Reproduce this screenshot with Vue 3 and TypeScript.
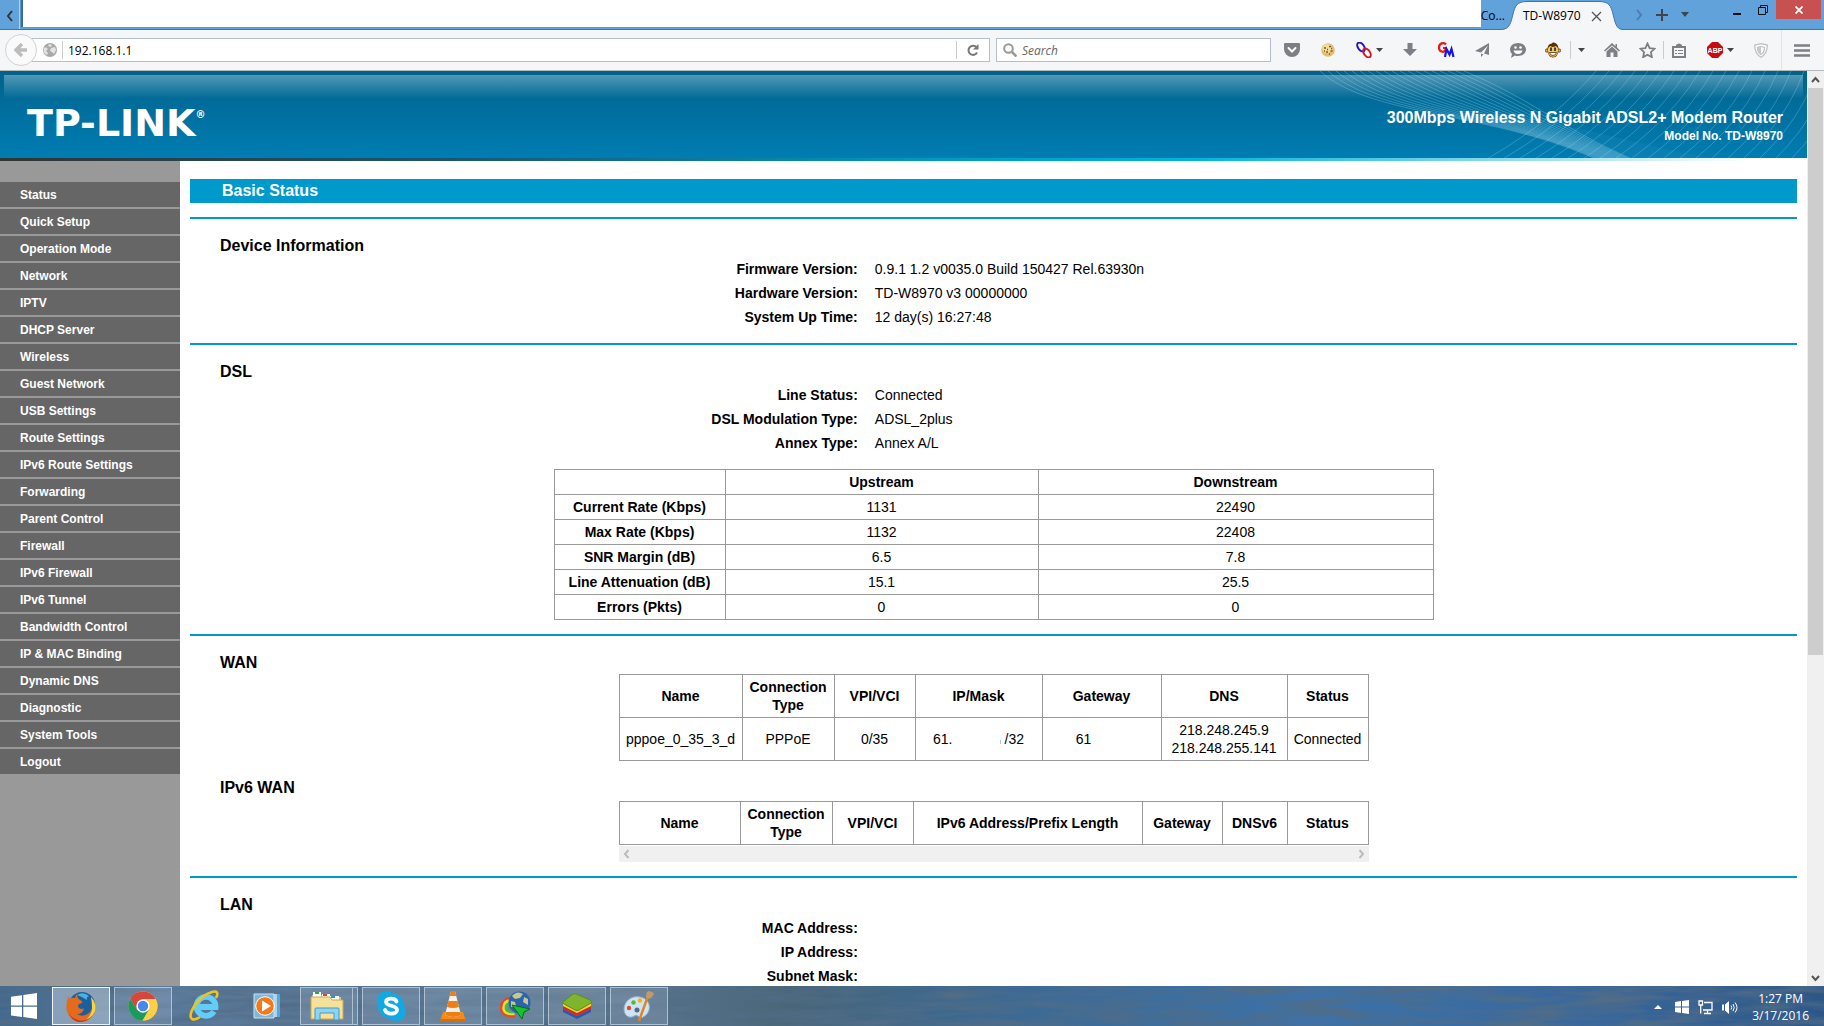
<script setup lang="ts">
import { ref } from 'vue'

const address = ref('192.168.1.1')
const query = ref('')

const menu: string[] = [
  'Status', 'Quick Setup', 'Operation Mode', 'Network', 'IPTV', 'DHCP Server', 'Wireless',
  'Guest Network', 'USB Settings', 'Route Settings', 'IPv6 Route Settings', 'Forwarding',
  'Parent Control', 'Firewall', 'IPv6 Firewall', 'IPv6 Tunnel', 'Bandwidth Control',
  'IP & MAC Binding', 'Dynamic DNS', 'Diagnostic', 'System Tools', 'Logout',
]

interface Pair { label: string; value: string }
const device: Pair[] = [
  { label: 'Firmware Version:', value: '0.9.1 1.2 v0035.0 Build 150427 Rel.63930n' },
  { label: 'Hardware Version:', value: 'TD-W8970 v3 00000000' },
  { label: 'System Up Time:', value: '12 day(s) 16:27:48' },
]
const dsl: Pair[] = [
  { label: 'Line Status:', value: 'Connected' },
  { label: 'DSL Modulation Type:', value: 'ADSL_2plus' },
  { label: 'Annex Type:', value: 'Annex A/L' },
]
const lan: Pair[] = [
  { label: 'MAC Address:', value: '' },
  { label: 'IP Address:', value: '' },
  { label: 'Subnet Mask:', value: '' },
]
const rates: string[][] = [
  ['Current Rate (Kbps)', '1131', '22490'],
  ['Max Rate (Kbps)', '1132', '22408'],
  ['SNR Margin (dB)', '6.5', '7.8'],
  ['Line Attenuation (dB)', '15.1', '25.5'],
  ['Errors (Pkts)', '0', '0'],
]

// Two crossing families of thin curves decorate the right end of the banner.
const falling = Array.from({ length: 19 }, (_, i) =>
  `M${10 + 8 * i} 0C${60 + 9 * i} ${46 - i} ${180 + 4 * i} ${40 + i} ${286 + 2 * i} 88`)
const rising = Array.from({ length: 26 }, (_, i) =>
  `M${130 + 17 * i} 112Q${230 + 15 * i} 66 ${286 + 13 * i} 0`)
</script>

<template>
  <div class="desktop">
    <header class="tabs">
      <button class="tab-scroll" aria-label="Scroll tabs left">
        <svg width="8" height="12" viewBox="0 0 8 12"><path d="M6 1 2 6l4 5" fill="none" stroke="#333" stroke-width="2" /></svg>
      </button>
      <div class="blank"></div>
      <div class="tab-prev">Co...</div>
      <div class="tab-active">
        <svg class="tab-shape" width="122" height="30" viewBox="0 0 122 30">
          <path d="M0 29.500C9 29.500 10 22 12 14 14 6 16 1.500 26 1.500H98C108 1.500 110 6 112 14 114 22 115 29.500 122 29.500V30H0Z" fill="#f5f6f7" />
          <path d="M0 29.500C9 29.500 10 22 12 14 14 6 16 1.500 26 1.500H98C108 1.500 110 6 112 14 114 22 115 29.500 122 29.500" fill="none" stroke="#3f74ad" />
        </svg>
        <span class="tab-title">TD-W8970</span>
        <button class="tab-close" aria-label="Close tab">
          <svg width="11" height="11" viewBox="0 0 11 11"><path d="m1 1 9 9M10 1 1 10" stroke="#555" stroke-width="1.300" /></svg>
        </button>
      </div>
      <div class="tab-tools">
        <svg width="7" height="12" viewBox="0 0 7 12"><path d="m1 1 4 5-4 5" fill="none" stroke="#4b7dad" stroke-width="2" /></svg>
        <svg width="12" height="12" viewBox="0 0 12 12"><path d="M6 0v12M0 6h12" stroke="#3c4650" stroke-width="2" /></svg>
        <svg width="8" height="5" viewBox="0 0 8 5"><path d="M0 0h8L4 5Z" fill="#3c4650" /></svg>
      </div>
      <div class="window-tools">
        <button aria-label="Minimize"><svg width="8" height="14" viewBox="0 0 8 14"><path d="M0 11h8" stroke="#111" stroke-width="2" /></svg></button>
        <button aria-label="Restore"><svg width="10" height="10" viewBox="0 0 10 10"><path d="M.5 2.500h7v7h-7ZM2.500 2.500v-2h7v7h-2" fill="none" stroke="#111" /></svg></button>
        <button class="close" aria-label="Close"><svg width="8" height="8" viewBox="0 0 8 8"><path d="m.5.5 7 7M7.500.5l-7 7" stroke="#fff" stroke-width="1.800" /></svg></button>
      </div>
    </header>

    <nav class="toolbar">
      <button class="back" aria-label="Back">
        <svg width="14" height="14" viewBox="0 0 14 14"><path d="M13 7H3M8 1 2 7l6 6" fill="none" stroke="#bcbcbc" stroke-width="3.400" /></svg>
      </button>
      <form class="address" @submit.prevent>
        <svg width="14" height="14" viewBox="0 0 14 14">
          <circle cx="7" cy="7" r="7" fill="#a9a9a9" />
          <path d="M1 5c2-1 3 0 4 1l-2 2 2 2-1 2C2 11 0 9 1 5ZM6 1l3 1-1 2-3-1ZM8 5l4-1 1 3-2 4-2-2-2-1Z" fill="#e4e4e4" />
        </svg>
        <i class="rule"></i>
        <input v-model="address" aria-label="Address" />
        <i class="rule"></i>
        <button class="reload" aria-label="Reload">
          <svg width="12" height="12" viewBox="0 0 12 12"><path d="M9.500 3.500A4.500 4.500 0 1 0 10 8.500" fill="none" stroke="#777" stroke-width="2" /><path d="M11.500 0v5.500H6Z" fill="#777" /></svg>
        </button>
      </form>
      <form class="search" @submit.prevent>
        <svg width="14" height="14" viewBox="0 0 14 14"><circle cx="5.500" cy="5.500" r="4.300" fill="none" stroke="#999" stroke-width="2" /><path d="m9 9 4.500 4.500" stroke="#999" stroke-width="2.600" /></svg>
        <input v-model="query" placeholder="Search" aria-label="Search" />
      </form>
      <button aria-label="Pocket"><svg width="16" height="14" viewBox="0 0 16 14"><path d="M1 0h14q1 0 1 1v5a8 8 0 0 1-16 0V1q0-1 1-1Z" fill="#7c7f85" /><path d="m4.500 5 3.500 3.500L11.500 5" fill="none" stroke="#fff" stroke-width="2" stroke-linecap="round" /></svg></button>
      <button aria-label="Cookies">
        <svg width="16" height="16" viewBox="0 0 16 16"><circle cx="8" cy="8" r="6.800" fill="#e2be72" /><circle cx="7" cy="6.500" r="4.600" fill="#f2dba0" /><path d="M4 6h2M9 4.500h2M6 10h2M10.500 9h2M7 7.500h1M11 6.500h1M4 9h1M9 12h1" stroke="#7e5a1f" stroke-width="1.500" /></svg>
      </button>
      <button class="with-arrow" aria-label="Links">
        <svg width="16" height="16" viewBox="0 0 16 16"><ellipse cx="5" cy="5" rx="3" ry="5" transform="rotate(-35 5 5)" fill="none" stroke="#2213d0" stroke-width="2" /><ellipse cx="11" cy="11" rx="3" ry="5" transform="rotate(-35 11 11)" fill="none" stroke="#e0141c" stroke-width="2" /></svg>
        <svg width="7" height="4" viewBox="0 0 7 4"><path d="M0 0h7L3.500 4Z" fill="#444" /></svg>
      </button>
      <button aria-label="Downloads"><svg width="14" height="14" viewBox="0 0 14 14"><path d="M4.500 0h5v6H14l-7 7-7-7h4.500Z" fill="#7c7f85" /></svg></button>
      <button aria-label="GM">
        <svg width="18" height="16" viewBox="0 0 18 16"><path d="M9 2.500C7 0 2 1 2 5.500S7 11 8.500 8V6H6" fill="none" stroke="#f01414" stroke-width="2.200" /><path d="m8 15 1.500-8 3 5.500 2-5.500L16.500 15" fill="none" stroke="#1414e6" stroke-width="2.200" /></svg>
      </button>
      <button aria-label="Send"><svg width="14" height="14" viewBox="0 0 14 14"><path d="M14 0v12L9 10.500 13 2.500 6 9.500 0 8ZM6 10.500l2.500 1L6 14Z" fill="#7c7f85" /></svg></button>
      <button aria-label="Chat"><svg width="16" height="15" viewBox="0 0 16 15"><path d="M8 0c4.500 0 8 2.800 8 6.500S12.500 13 8 13q-1.500 0-3-.5L1 15l1-4Q0 9 0 6.500C0 2.800 3.500 0 8 0Z" fill="#7c7f85" /><circle cx="5.500" cy="4.500" r="1.300" fill="#fff" /><circle cx="10.500" cy="4.500" r="1.300" fill="#fff" /><path d="M3.500 7.500h9Q11.500 11 8 11T3.500 7.500Z" fill="#fff" /></svg></button>
      <button class="monkey" aria-label="Monkey">
        <svg width="16" height="16" viewBox="0 0 16 16"><circle cx="2" cy="8.500" r="1.700" fill="#e9a94f" stroke="#4a2a0a" stroke-width=".7" /><circle cx="14" cy="8.500" r="1.700" fill="#e9a94f" stroke="#4a2a0a" stroke-width=".7" /><path d="M9 .5Q7 0 7 1.500 2 2 2.500 8 3 15.500 8 15.500T13.500 8Q14 2 9 .5Z" fill="#5a3008" /><path d="M5.500 4Q8 6 10.500 4 13.500 5 13 8.500 12.500 14.800 8 14.800T3 8.500Q2.500 5 5.500 4Z" fill="#f5c766" /><path d="M6 5.500v3.500M10 5.500v3.500" stroke="#222" stroke-width="1.600" /><path d="M4.500 10.500h7Q11 13.500 8 13.500T4.500 10.500Z" fill="#fff" stroke="#5a3008" stroke-width=".8" /></svg>
      </button>
      <button class="drop" aria-label="Monkey menu"><svg width="7" height="4" viewBox="0 0 7 4"><path d="M0 0h7L3.500 4Z" fill="#444" /></svg></button>
      <button aria-label="Home"><svg width="16" height="14" viewBox="0 0 16 14"><path d="M8 0l3.500 3.200V1H13v3.600L16 7.500l-1 1-7-6-7 6-1-1Z" fill="#7c7f85" /><path d="m2.500 8.500 5.500-5 5.500 5V14H9.500V9.500h-3V14h-4Z" fill="#7c7f85" /></svg></button>
      <button class="star" aria-label="Bookmark"><svg width="17" height="16" viewBox="0 0 17 16"><path d="m8.500 1.500 2.100 4.700 5 .5-3.700 3.500 1 5-4.400-2.500-4.400 2.500 1-5L1.400 6.700l5-.5Z" fill="none" stroke="#7c7f85" stroke-width="1.800" /></svg></button>
      <button class="list" aria-label="Bookmarks list"><svg width="14" height="15" viewBox="0 0 14 15"><path d="M1 4h12v10H1Z" fill="none" stroke="#7c7f85" stroke-width="2" /><path d="M4 3.500V2Q7-1 10 2V3.500Z" fill="#7c7f85" /><path d="M3 7.500h2M6 7.500h5M3 10.500h2M6 10.500h5" stroke="#7c7f85" /></svg></button>
      <button class="with-arrow" aria-label="ABP">
        <svg width="16" height="16" viewBox="0 0 16 16"><path d="M5 0h6l5 5v6l-5 5H5l-5-5V5Z" fill="#c70d12" /><text x="8" y="11" text-anchor="middle" class="abp">ABP</text></svg>
        <svg width="7" height="4" viewBox="0 0 7 4"><path d="M0 0h7L3.500 4Z" fill="#444" /></svg>
      </button>
      <button aria-label="Shield"><svg width="14" height="15" viewBox="0 0 14 15"><path d="M7 .7 13.300 2C13.300 8 11 12 7 14.300 3 12 .7 8 .7 2Z" fill="#fff" stroke="#c0c0c0" stroke-width="1.300" /><path d="M7 3.500 10.500 4.500C10.500 8 9.500 10 7 11.500 4.500 10 3.500 8 3.500 4.500Z" fill="none" stroke="#c0c0c0" stroke-width="1.300" /><path d="M7 3.500v8C4.500 10 3.500 8 3.500 4.500Z" fill="#c8c8c8" /></svg></button>
      <button class="burger" aria-label="Open menu"><svg width="16" height="13" viewBox="0 0 16 13"><path d="M0 1.500h16M0 6.500h16M0 11.500h16" stroke="#7c7f85" stroke-width="2.600" /></svg></button>
    </nav>

    <div class="viewport">
      <div class="page">
        <div class="banner">
          <div class="gloss"></div>
          <svg class="waves" width="497" height="87" viewBox="0 0 497 87" fill="none" stroke="#bfe6f5">
            <path d="M50 48C170 38 220 62 290 87H400C300 70 220 30 50 48Z" fill="#8fd3ee" opacity=".06" stroke="none" />
            <path v-for="d in falling" :key="d" :d="d" opacity=".27" />
            <path v-for="d in rising" :key="d" :d="d" opacity=".25" />
          </svg>
          <div class="logo">TP-LINK<sup>®</sup></div>
          <div class="product">
            <strong>300Mbps Wireless N Gigabit ADSL2+ Modem Router</strong>
            <b>Model No. TD-W8970</b>
          </div>
        </div>
        <div class="strip"></div>
        <div class="columns">
          <nav class="side">
            <a v-for="item in menu" :key="item" href="#">{{ item }}</a>
          </nav>
          <main>
            <h1>Basic Status</h1>
            <section>
              <h2>Device Information</h2>
              <dl>
                <template v-for="p in device" :key="p.label"><dt>{{ p.label }}</dt><dd>{{ p.value }}</dd></template>
              </dl>
            </section>
            <section>
              <h2>DSL</h2>
              <dl>
                <template v-for="p in dsl" :key="p.label"><dt>{{ p.label }}</dt><dd>{{ p.value }}</dd></template>
              </dl>
              <table class="rates">
                <colgroup><col class="w171" /><col class="w313" /><col /></colgroup>
                <thead><tr><td></td><th>Upstream</th><th>Downstream</th></tr></thead>
                <tbody>
                  <tr v-for="r in rates" :key="r[0]"><th>{{ r[0] }}</th><td>{{ r[1] }}</td><td>{{ r[2] }}</td></tr>
                </tbody>
              </table>
            </section>
            <section>
              <h2>WAN</h2>
              <table class="wan">
                <colgroup><col class="w123" /><col class="w92" /><col class="w81" /><col class="w127" /><col class="w119" /><col class="w126" /><col class="w81" /></colgroup>
                <thead><tr><th>Name</th><th>Connection Type</th><th>VPI/VCI</th><th>IP/Mask</th><th>Gateway</th><th>DNS</th><th>Status</th></tr></thead>
                <tbody>
                  <tr>
                    <td>pppoe_0_35_3_d</td><td>PPPoE</td><td>0/35</td>
                    <td>61.<i class="erased"></i>/32</td>
                    <td>61<i class="erased short"></i></td>
                    <td>218.248.245.9<br />218.248.255.141</td><td>Connected</td>
                  </tr>
                </tbody>
              </table>
              <h2 class="second">IPv6 WAN</h2>
              <table class="wan">
                <colgroup><col class="w121" /><col class="w92" /><col class="w81" /><col class="w229" /><col class="w80" /><col class="w65" /><col class="w81" /></colgroup>
                <thead><tr><th>Name</th><th>Connection Type</th><th>VPI/VCI</th><th>IPv6 Address/Prefix Length</th><th>Gateway</th><th>DNSv6</th><th>Status</th></tr></thead>
              </table>
              <div class="hscroll">
                <svg width="7" height="10" viewBox="0 0 7 10"><path d="M5.500 1 2 5l3.500 4" fill="none" stroke="#bcbcbc" stroke-width="2" /></svg>
                <svg width="7" height="10" viewBox="0 0 7 10"><path d="M1.500 1 5 5 1.500 9" fill="none" stroke="#bcbcbc" stroke-width="2" /></svg>
              </div>
            </section>
            <section>
              <h2>LAN</h2>
              <dl>
                <template v-for="p in lan" :key="p.label"><dt>{{ p.label }}</dt><dd>{{ p.value }}</dd></template>
              </dl>
            </section>
          </main>
        </div>
      </div>
      <div class="vscroll">
        <svg width="17" height="17" viewBox="0 0 17 17"><path d="m5 11 3.500-4 3.500 4" fill="none" stroke="#555" stroke-width="2" /></svg>
        <div class="thumb"></div>
        <svg width="17" height="17" viewBox="0 0 17 17"><path d="m5 7 3.500 4L12 7" fill="none" stroke="#555" stroke-width="2" /></svg>
      </div>
    </div>

    <footer class="taskbar">
      <svg class="water" width="100%" height="40" aria-hidden="true">
        <filter id="ripple" x="0" y="0" width="100%" height="100%">
          <feTurbulence type="fractalNoise" baseFrequency="0.014 0.12" numOctaves="5" seed="8" />
          <feColorMatrix values="0 0 0 0 .08  0 0 0 0 .15  0 0 0 0 .24  2.200 0 0 0 -.74" />
        </filter>
        <rect width="100%" height="40" filter="url(#ripple)" />
      </svg>
      <button class="start" aria-label="Start">
        <svg width="26" height="26" viewBox="0 0 26 26"><path d="M0 3.700 11 2.200V12.500H0ZM12.300 2 26 0v12.500H12.300ZM0 13.700h11V24L0 22.400ZM12.300 13.700H26V26l-13.700-2Z" fill="#fff" /></svg>
      </button>
      <button class="task current" aria-label="Firefox">
        <svg width="32" height="32" viewBox="0 0 32 32">
          <circle cx="17" cy="15" r="13" fill="#1d5f9e" /><path d="M12 5q6-4 12 1-3 1-2 4-4-3-10-5Z" fill="#49b3e0" />
          <path d="M26 7q6 7 4 14-3 9-13 10.500Q5 32 2 21 0 12 4 6l1 3q2-2 5-1 0-2 2-4 0 4 3 6 3 1 2 3l-3 1q-2 2 0 4 3 2 5 0-1 6-7 6 6 4 12-1t2-16Z" fill="#e66a1c" />
          <path d="M26 7q6 7 4 14-3 7-9 9 6-6 6-12t-1-11Z" fill="#fbd33c" /><path d="M2 15q0 12 11 15 8 2 14-4-5 7-14 6Q3 29 2 15Z" fill="#c93a1a" />
        </svg>
      </button>
      <button class="task open" aria-label="Chrome">
        <svg width="30" height="30" viewBox="0 0 30 30"><circle cx="15" cy="15" r="14.500" fill="#fdcf47" /><path d="M2.400 7.700A14.500 14.500 0 0 1 27.600 8H15L8.700 18.500Z" fill="#d8463a" /><path d="M2.400 7.700 8.800 18.500 21 18.500 15 29.500A14.500 14.500 0 0 1 2.400 7.700Z" fill="#1a9a5b" /><path d="M27.600 8A14.500 14.500 0 0 1 14.500 29.500L21 18.500 21 8Z" fill="#fdcf47" /><circle cx="15" cy="15" r="6.700" fill="#fff" /><circle cx="15" cy="15" r="5.200" fill="#4687f1" /></svg>
      </button>
      <button class="task" aria-label="Internet Explorer">
        <svg width="32" height="32" viewBox="0 0 32 32"><path d="M25 21.500A9.500 9.500 0 1 1 26.500 17H9" fill="none" stroke="#62cdf7" stroke-width="5.800" /><path d="M27 8Q31 0 23 2 13 5 6 15-1 26 3 29q3 1.500 8-2" fill="none" stroke="#f1c41c" stroke-width="2.600" /></svg>
      </button>
      <button class="task" aria-label="Media Player">
        <svg width="28" height="26" viewBox="0 0 28 26"><path d="M6 1h21v23H6Z" fill="#5ba7d4" /><path d="M4 1h20v23H4Z" fill="#a8d4ee" /><path d="M1 1h20v24H1Z" fill="#7fb7da" stroke="#c8e4f4" /><circle cx="12" cy="13" r="9.300" fill="#f27a1a" stroke="#fff" /><path d="m9 7.500 9 5.500-9 5.500Z" fill="#fff" /></svg>
      </button>
      <button class="task open stacked" aria-label="File Explorer">
        <svg width="34" height="30" viewBox="0 0 34 30"><path d="M2 4h10l2 2h17v20H2Z" fill="#e0c368" /><path d="M3 1h8v5H3ZM12 3h8v5h-8ZM20 5h9v5h-9Z" fill="#fff" /><path d="M5 1h4v2H5Z" fill="#2aa83c" /><path d="M13 3h4v2h-4Z" fill="#d8442c" /><path d="M21 5h4v2h-4Z" fill="#2f8fd8" /><path d="M1 6h19l2 3h11v19H1Z" fill="#f5e19a" stroke="#c9a94d" /><path d="M5 29V18q0-1 1-1h22q1 0 1 1v11h-5v-7H10v7Z" fill="#8ed3f0" stroke="#3f9cc8" /></svg>
      </button>
      <button class="task open" aria-label="Skype">
        <svg width="32" height="32" viewBox="0 0 32 32"><rect x="2" y="1" width="19" height="20" rx="9" fill="#12a8e4" /><rect x="11" y="12" width="20" height="19" rx="9" fill="#12a8e4" /><circle cx="16" cy="16" r="13" fill="#12a8e4" /><path d="M21.500 11.500C20 7.500 11 7.500 11 12c0 5 11 2.500 11 8 0 4.500-10 5-12 0" fill="none" stroke="#fff" stroke-width="3.800" stroke-linecap="round" /></svg>
      </button>
      <button class="task open" aria-label="VLC">
        <svg width="28" height="32" viewBox="0 0 28 32"><path d="M4 22h20l3 9H1Z" fill="#f28a1c" /><path d="M1 29h26v2H1Z" fill="#d96f0c" /><path d="M12 1h4l6 24q-8 4-16 0Z" fill="#f5efe8" /><path d="M12 1h4l1.300 5h-6.600ZM9.500 11h9l1.400 6q-6 2-12 0ZM6.800 22h14.500l.8 3q-8 4-16 0Z" fill="#f07d14" /></svg>
      </button>
      <button class="task open" aria-label="Download Manager">
        <svg width="32" height="30" viewBox="0 0 32 30"><path d="M13 7C5 7 2 12 2 17s4 9 14 8" fill="none" stroke="#e4462f" stroke-width="2.500" /><path d="M13 9.500C7 9.500 4.500 12.500 4.500 17s4 6.500 11 6" fill="none" stroke="#f3d92c" stroke-width="2.500" /><path d="M13 12C9 12 7 13.500 7 17s3 4 8 4" fill="none" stroke="#3fbf3f" stroke-width="2.500" /><circle cx="20.500" cy="11.500" r="11" fill="#2d62b0" /><path d="M13 5q5-6 11-2l-3 4-5 1ZM25 6l4 2v6l-5-3ZM12 10l4 1 1 4-5 1Z" fill="#c3c98a" /><path d="m13 14 18 4-6 3-2 7Z" fill="#17c32b" stroke="#0b6b18" /></svg>
      </button>
      <button class="task open" aria-label="BlueStacks">
        <svg width="30" height="26" viewBox="0 0 30 26"><path d="m1 16 14 7 14-7v3l-14 7-14-7Z" fill="#2559b5" /><path d="m1 13 14 7 14-7v3l-14 7-14-7Z" fill="#e0261c" /><path d="m1 10 14 7 14-7v3l-14 7-14-7Z" fill="#f6d323" /><path d="M1 9 11 1q1-1 3 0l14 6q2 1 1 3l-12 7q-2 1-4 0L2 11Q0 10 1 9Z" fill="#7fb52c" stroke="#5d9019" /></svg>
      </button>
      <button class="task open" aria-label="Paint">
        <svg width="32" height="32" viewBox="0 0 32 32"><path d="M17 7C8 5 1 12 1 19s6 10 10 7q3-2 5 1 3 2 7-2c6-6 4-16-6-18Z" fill="#cfe4f2" stroke="#8fb3cc" /><circle cx="6" cy="18" r="2.200" fill="#e2472f" /><circle cx="10.500" cy="12.500" r="2.200" fill="#59b53c" /><circle cx="17" cy="10.500" r="2.200" fill="#f3b120" /><circle cx="14" cy="20" r="2.500" fill="#4c6d8b" /><path d="m25 6-9 25" stroke="#e08526" stroke-width="2.500" /><path d="M23 7q0-6 3-6l5 2q-1 5-6 6Z" fill="#c49a66" /></svg>
      </button>
      <div class="tray">
        <svg width="8" height="4" viewBox="0 0 8 4"><path d="M0 4h8L4 0Z" fill="#fff" /></svg>
        <svg width="14" height="14" viewBox="0 0 14 14"><path d="M0 2 6 1v5.500H0ZM7 1l7-1v6.500H7ZM0 7.500h6V13L0 12ZM7 7.500h7V14l-7-1Z" fill="#fff" /></svg>
        <svg width="15" height="15" viewBox="0 0 15 15" fill="none" stroke="#fff" stroke-width="1.300"><path d="M6 2.500h8v7.500H5M9.500 10v3M6 13.500h7M1 1h3.500v4H1ZM2.700 5v8.500" /></svg>
        <svg width="16" height="15" viewBox="0 0 16 15"><path d="M0 4.500h2v6H0ZM3 4.500 7 1v13l-4-3.500Z" fill="#fff" /><path d="M9 5.500q1.500 2 0 4M11 4q2.500 3.500 0 7M13 2.500q4 5 0 10" fill="none" stroke="#fff" /></svg>
        <div class="clock"><span>1:27 PM</span><span>3/17/2016</span></div>
      </div>
    </footer>
  </div>
</template>

<style>
body {
  margin: 0;
}
</style>

<style scoped>
.desktop {
  display: flex;
  flex-direction: column;
  height: 100vh;
  overflow: hidden;
  background: #fff;
  color: #000;
  font-family: "Liberation Sans", Arial, sans-serif;
  font-size: 14px;
}
*,
*::before,
*::after {
  box-sizing: border-box;
}
button {
  display: flex;
  align-items: center;
  justify-content: center;
  flex: none;
  padding: 0;
  border: 0;
  background: none;
}
svg {
  display: block;
  flex: none;
}

/* Tab strip */
.tabs {
  display: flex;
  flex: none;
  height: 30px;
  border-bottom: 1px solid #3f74ad;
  background: #62a2db;
  font-family: "Open Sans", "Noto Sans", sans-serif;
  font-size: 12px;
}
.tab-scroll {
  width: 20px;
  height: 29px;
  padding-top: 3px;
  border-right: 1px solid #b5d2ec;
}
.blank {
  flex: 1;
  height: 27px;
  margin-left: 3px;
  background: #fff;
  box-shadow: -2px 0 1px #3d6d9c;
}
.tab-prev {
  margin-right: -4px;
  line-height: 32px;
}
.tab-active {
  position: relative;
  display: flex;
  align-items: center;
  width: 119px;
  height: 30px;
  padding-left: 22px;
}
.tab-shape {
  position: absolute;
  left: 0;
  top: 0;
}
.tab-title {
  position: relative;
  flex: 1;
}
.tab-close {
  position: relative;
  width: 11px;
  height: 11px;
  margin: 2px 18px 0 0;
}
.tab-tools {
  display: flex;
  align-items: center;
  gap: 13px;
  width: 104px;
  padding-left: 16px;
}
.window-tools {
  display: flex;
  margin-right: 3px;
}
.window-tools button {
  width: 26px;
  height: 19px;
}
.window-tools .close {
  width: 45px;
  background: #c75050;
}

/* Navigation toolbar */
.toolbar {
  display: flex;
  flex: none;
  align-items: center;
  height: 41px;
  padding-right: 3px;
  border-bottom: 1px solid #b9b9b9;
  background: #f5f6f7;
  font-family: "Open Sans", "Noto Sans", sans-serif;
  font-size: 12px;
}
.toolbar > button {
  width: 36px;
  height: 32px;
}
.toolbar > .back {
  z-index: 1;
  width: 32px;
  margin: 0 -7px 0 5px;
  border: 1px solid #d0d3d6;
  border-radius: 50%;
  background: #fafafa;
}
.address,
.search {
  display: flex;
  align-items: center;
  height: 24px;
  border: 1px solid #b4bfca;
  background: #fff;
}
.address {
  flex: 1;
  padding-left: 12px;
}
.search {
  flex: 0 1 275px;
  gap: 5px;
  margin: 0 3px 0 6px;
  padding-left: 6px;
}
.rule {
  width: 1px;
  height: 18px;
  margin: 0 5px;
  background: #ccc;
}
.address .rule + .reload {
  width: 22px;
  margin-right: 5px;
}
input {
  flex: 1;
  min-width: 0;
  height: 20px;
  padding: 0;
  border: 0;
  outline: 0;
  background: none;
  color: #000;
  font: inherit;
}
.search input::placeholder {
  color: #666;
  font-style: italic;
  opacity: 1;
}
.toolbar > .with-arrow {
  gap: 4px;
  justify-content: flex-start;
  width: 46px;
  padding-left: 10px;
}
.abp {
  fill: #fff;
  font: bold 7px "Liberation Sans", sans-serif;
}
.toolbar > .monkey {
  width: 34px;
}
.toolbar > .drop {
  justify-content: flex-start;
  width: 24px;
  height: 18px;
  padding-left: 7px;
  border-left: 1px solid #ccc;
}
.toolbar > .star {
  width: 33px;
  padding-left: 2px;
}
.toolbar > .list {
  width: 30px;
  height: 18px;
  margin-right: 4px;
  border-left: 1px solid #ccc;
}
.toolbar > .burger {
  width: 40px;
  height: 40px;
  margin-left: 2px;
  border-left: 1px solid #e2e3e4;
}

/* Router page */
.viewport {
  display: flex;
  flex: 1;
  min-height: 0;
}
.page {
  display: flex;
  flex: 1;
  flex-direction: column;
  min-width: 0;
  overflow: hidden;
}
.banner {
  position: relative;
  display: flex;
  flex: none;
  justify-content: space-between;
  height: 87px;
  padding: 0 24px 0 27px;
  background: linear-gradient(#00628a, #006c9a 35%, #007db2);
  color: #fff;
}
.gloss {
  position: absolute;
  top: 4px;
  right: 4px;
  left: 4px;
  height: 24px;
  background: linear-gradient(#5297b6, #006a96);
}
.waves {
  position: absolute;
  top: 0;
  right: 0;
}
.logo {
  position: relative;
  padding-top: 31px;
  font: bold 38px/42px "DejaVu Sans", sans-serif;
}
.logo sup {
  font-size: 10px;
  line-height: 10px;
  vertical-align: 18px;
}
.product {
  position: relative;
  display: flex;
  flex-direction: column;
  padding-top: 37px;
  font-size: 16px;
  line-height: 19px;
  text-align: right;
}
.product b {
  font-size: 12px;
}
.strip {
  flex: none;
  height: 3px;
  background: linear-gradient(90deg, #333, #1a5673 25%, #0099bd 51%, #00b4dc 66%, #5fcde6 78%, #fff 97%);
}
.columns {
  display: flex;
  flex: 1;
  min-height: 0;
}
.side {
  display: flex;
  flex: none;
  flex-direction: column;
  gap: 2px;
  width: 180px;
  padding-top: 21px;
  background: #999;
}
.side a {
  flex: none;
  height: 25px;
  padding-left: 20px;
  background: #666;
  color: #fff;
  font-size: 12px;
  font-weight: bold;
  line-height: 27px;
  text-decoration: none;
}
main {
  flex: 1;
  min-width: 0;
  padding: 18px 10px 0;
}
h1 {
  height: 24px;
  margin: 0 0 14px;
  padding-left: 32px;
  background: #0099cc;
  color: #fff;
  font-size: 16px;
  line-height: 24px;
}
section {
  padding: 14px 0;
  border-top: 2px solid #0099cc;
}
h2 {
  height: 24px;
  margin: 0;
  padding-left: 30px;
  font-size: 16px;
  line-height: 26px;
}
.second {
  margin: 14px 0 2px;
}
dl {
  display: grid;
  grid-template-columns: 21fr 29fr;
  column-gap: 17px;
  margin: 0;
  line-height: 24px;
}
dt {
  font-weight: bold;
  text-align: right;
}
dd {
  min-height: 24px;
  margin: 0;
}
table {
  margin: 0 auto;
  border-collapse: collapse;
  table-layout: fixed;
  line-height: 18px;
  text-align: center;
}
th,
td {
  padding: 0 4px;
  border: 1px solid #999;
}
.rates {
  width: 880px;
  margin-top: 14px;
}
.rates tr {
  height: 25px;
}
.wan {
  width: 750px;
}
.wan tr {
  height: 43px;
}
.wan td {
  padding: 0;
}
.w65 { width: 65px; }
.w80 { width: 80px; }
.w81 { width: 81px; }
.w92 { width: 92px; }
.w119 { width: 119px; }
.w121 { width: 121px; }
.w123 { width: 123px; }
.w126 { width: 126px; }
.w127 { width: 127px; }
.w171 { width: 171px; }
.w229 { width: 229px; }
.w313 { width: 313px; }
.erased {
  display: inline-block;
  width: 52px;
  height: 4px;
  background: linear-gradient(#9cc8ee, #9cc8ee) 47px 0 / 1px 4px no-repeat;
}
.short {
  width: 36px;
  background: none;
}
.hscroll {
  display: flex;
  align-items: center;
  justify-content: space-between;
  width: 750px;
  height: 16px;
  margin: 1px auto 0;
  padding: 0 4px;
  background: #f0f0f0;
}
.vscroll {
  display: flex;
  flex: none;
  flex-direction: column;
  justify-content: space-between;
  width: 17px;
  background: #f0f0f0;
}
.thumb {
  flex: 0 0 62%;
  margin: 0 1px auto 1px;
  background: #cdcdcd;
}

/* Taskbar */
.taskbar {
  position: relative;
  display: flex;
  flex: none;
  gap: 4px;
  height: 40px;
  padding: 1px 0;
  background: linear-gradient(90deg, #3f6890, #5c7b9c 8%, #587695 20%, #5b7690 34%, #4a6678 43%, #3c688f 52%, #3c72aa 72%, #38679c 88%, #2c5687);
}
.water {
  position: absolute;
  top: 0;
  left: 0;
}
.taskbar > button,
.tray {
  position: relative;
}
.start {
  width: 48px;
}
.task {
  width: 58px;
  border: 1px solid transparent;
}
.open {
  border-color: rgba(220, 232, 242, 0.6);
  background: rgba(220, 232, 245, 0.16);
}
.current {
  border: 1px solid #f0f4f8;
  background: rgba(225, 235, 245, 0.4);
}
.stacked {
  padding-right: 5px;
}
.stacked::after {
  position: absolute;
  top: 0;
  right: 4px;
  bottom: 0;
  border-right: 1px solid rgba(220, 232, 242, 0.6);
  content: "";
}
.tray {
  display: flex;
  align-items: center;
  gap: 9px;
  margin-left: auto;
  padding: 2px 15px 0 0;
  color: #fff;
  font-family: "Open Sans", "Noto Sans", sans-serif;
  font-size: 12px;
  line-height: 17px;
}
.tray > svg:first-child {
  margin-right: 4px;
}
.clock {
  display: flex;
  flex-direction: column;
  align-items: center;
  margin-left: 5px;
}
</style>
